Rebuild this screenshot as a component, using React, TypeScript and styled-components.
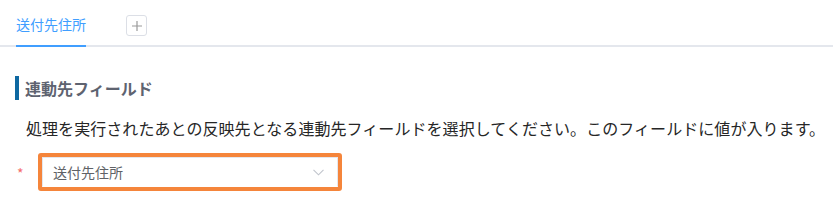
import React from "react";
import styled, { createGlobalStyle } from "styled-components";

const Global = createGlobalStyle`
  html, body { margin: 0; padding: 0; background: #fff; }
  body { font-family: "Noto Sans CJK JP", "Noto Sans", sans-serif; }
`;

const Page = styled.div`
  width: 833px;
  height: 205px;
  overflow: hidden;
`;

const TabBar = styled.div`
  display: flex;
  align-items: flex-end;
  padding-left: 16px;
  border-bottom: 2px solid #e4e7ed;
  box-sizing: border-box;
  height: 47px;
`;

const Tab = styled.div<{ $active?: boolean }>`
  font-size: 14px;
  line-height: 20px;
  color: ${(p) => (p.$active ? "#409eff" : "#303133")};
  padding: 0 0 11px;
  margin-bottom: -2px;
  border-bottom: 2px solid ${(p) => (p.$active ? "#409eff" : "transparent")};
`;

const AddButton = styled.button`
  width: 21px;
  height: 21px;
  margin: 0 0 8px 40px;
  padding: 0;
  border: 1px solid #dcdfe6;
  border-radius: 3px;
  background: #fff;
  display: flex;
  align-items: center;
  justify-content: center;
  align-self: flex-end;
  position: relative;
  top: -1px;
`;

const Section = styled.div`
  padding: 29px 0 0 15px;
`;

const Heading = styled.h3`
  margin: 0;
  display: flex;
  align-items: center;
  height: 24px;
  border-left: 4px solid #0e68a1;
  padding-left: 6px;
  font-size: 16px;
  font-weight: 700;
  color: #5e6370;
  line-height: 24px;
`;

const Description = styled.p`
  margin: 16px 0 0 11px;
  font-size: 16px;
  line-height: 24px;
  color: #262626;
  white-space: nowrap;
  letter-spacing: 0.06px;
`;

const FieldRow = styled.div`
  display: flex;
  align-items: center;
  margin-top: 13px;
`;

const Required = styled.span`
  width: 23px;
  font-size: 14px;
  color: #f56c6c;
  padding-left: 2px;
  box-sizing: border-box;
  line-height: 14px;
  position: relative;
  top: 1px;
`;

const Highlight = styled.div`
  border: 4px solid #f5853b;
  border-radius: 3px;
`;

const Select = styled.div`
  width: 296px;
  height: 30px;
  box-sizing: border-box;
  border: 1px solid #e4e7ed;
  border-bottom-color: #fff;
  background: #fff;
  display: flex;
  align-items: center;
  justify-content: space-between;
  padding: 0 13px 0 10px;
  font-size: 14px;
  color: #606266;
`;

export default function App() {
  return (
    <Page>
      <Global />
      <TabBar>
        <Tab $active>送付先住所</Tab>
        <AddButton aria-label="追加">
          <svg width="12" height="12" viewBox="0 0 12 12">
            <path d="M6 1v10M1 6h10" stroke="#9a9a9a" strokeWidth="1.2" />
          </svg>
        </AddButton>
      </TabBar>
      <Section>
        <Heading>連動先フィールド</Heading>
        <Description>
          処理を実行されたあとの反映先となる連動先フィールドを選択してください。このフィールドに値が入ります。
        </Description>
        <FieldRow>
          <Required>*</Required>
          <Highlight>
            <Select>
              <span>送付先住所</span>
              <svg width="11" height="7" viewBox="0 0 11 7">
                <path d="M0.5 0.8L5.5 5.8L10.5 0.8" fill="none" stroke="#c0c4cc" strokeWidth="1.1" />
              </svg>
            </Select>
          </Highlight>
        </FieldRow>
      </Section>
    </Page>
  );
}
